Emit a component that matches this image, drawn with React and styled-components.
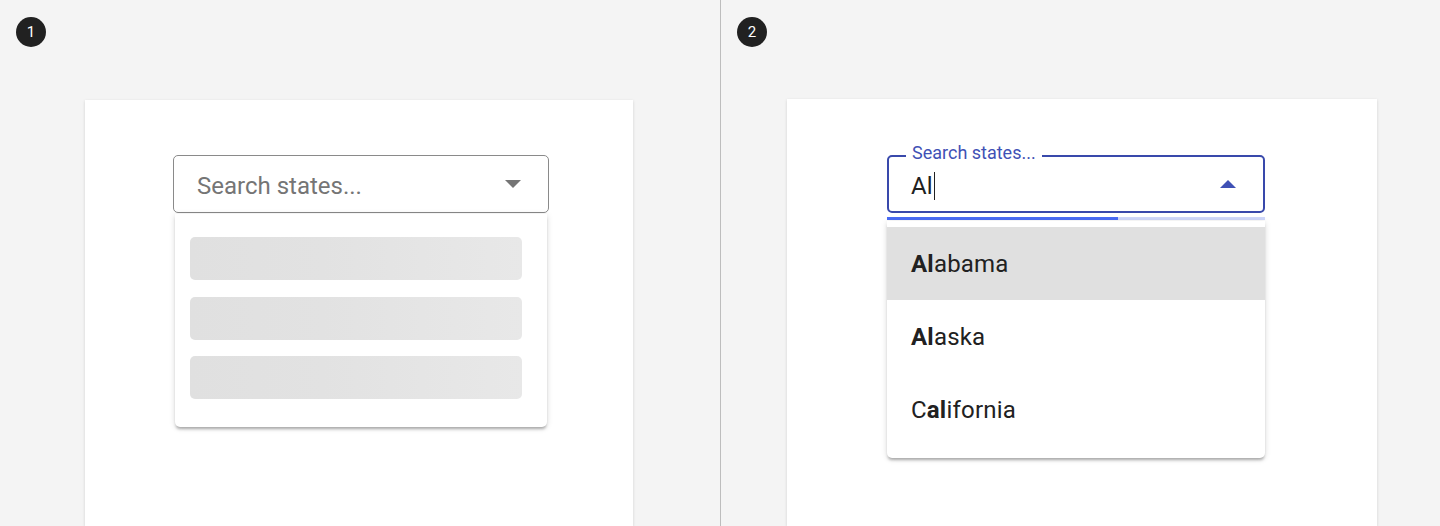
import React from "react";
import styled, { createGlobalStyle } from "styled-components";

const Global = createGlobalStyle`
  html, body, #root { height: 100%; margin: 0; }
  body { background: #f4f4f4; font-family: Roboto, "Liberation Sans", sans-serif; overflow: hidden; }
  * { box-sizing: border-box; }
`;

const Page = styled.div`
  display: flex;
  height: 100%;
`;

const Half = styled.section`
  flex: 0 0 ${(p) => p.$w}px;
  display: flex;
  flex-direction: column;
  padding: 17px 0 0 16px;
  min-height: 0;
`;

const Divider = styled.div`
  flex: 0 0 1px;
  background: #bdbdbd;
`;

const Badge = styled.div`
  width: 30px;
  height: 30px;
  border-radius: 50%;
  background: #212121;
  color: #fff;
  font-size: 15px;
  display: flex;
  align-items: center;
  justify-content: center;
`;

const Card = styled.div`
  margin: ${(p) => p.$top}px 0 0 ${(p) => p.$left}px;
  width: ${(p) => p.$w}px;
  flex: 1;
  background: #fff;
  box-shadow: 0 1px 3px rgba(0, 0, 0, 0.14);
  padding: ${(p) => p.$pt}px 0 0 ${(p) => p.$pl}px;
`;

const Field = styled.div`
  position: relative;
  width: ${(p) => p.$w}px;
`;

const InputBox = styled.div`
  position: relative;
  height: 58px;
  border: ${(p) => (p.$focused ? "2px solid #3949ab" : "1px solid #8a8a8a")};
  border-radius: 5px;
  display: flex;
  align-items: center;
  padding: 0 27px 0 ${(p) => (p.$focused ? 22 : 23)}px;
  background: #fff;
`;

const Placeholder = styled.span`
  flex: 1;
  font-size: 24px;
  color: #757575;
  line-height: 1;
  padding-top: 4px;
`;

const Value = styled.span`
  flex: 1;
  display: flex;
  align-items: center;
  font-size: 24px;
  color: #212121;
  line-height: 1;
  padding-top: 3px;
`;

const Caret = styled.span`
  display: inline-block;
  width: 1.5px;
  height: 28px;
  background: #212121;
  margin-left: 1px;
`;

const FloatLabel = styled.span`
  position: absolute;
  left: 17px;
  top: -15px;
  padding: 0 6px;
  background: #fff;
  font-size: 18px;
  color: #3f51b5;
  line-height: 22px;
`;

const Progress = styled.div`
  height: 3px;
  margin: 4px 0 0 0;
  background: #d0d8fb;
  position: relative;
`;

const ProgressFill = styled.div`
  height: 100%;
  background: #4a6cf5;
`;

const Menu = styled.div`
  position: absolute;
  left: ${(p) => p.$inset}px;
  right: ${(p) => p.$inset}px;
  top: ${(p) => p.$top}px;
  background: #fff;
  border-radius: 0 0 5px 5px;
  box-shadow: 0 3px 3px -1px rgba(0, 0, 0, 0.28), 0 1px 6px rgba(0, 0, 0, 0.14);
  padding: ${(p) => p.$pad};
  display: flex;
  flex-direction: column;
  gap: ${(p) => p.$gap || 0}px;
`;

const Skeleton = styled.div`
  height: 43px;
  width: 332px;
  border-radius: 5px;
  background: linear-gradient(90deg, #e0e0e0 0%, #e2e2e2 40%, #e8e8e8 100%);
`;

const Option = styled.div`
  height: 73px;
  display: flex;
  align-items: center;
  padding-left: 24px;
  font-size: 24px;
  color: #212121;
  letter-spacing: 0.2px;
  background: ${(p) => (p.$active ? "#e0e0e0" : "transparent")};
  b { font-weight: 700; }
`;

const Arrow = ({ up, color }) => (
  <svg width="16" height="8" viewBox="0 0 16 8" style={{ flex: "0 0 auto" }}>
    {up ? <path d="M0 8 L8 0 L16 8 Z" fill={color} /> : <path d="M0 0 L16 0 L8 8 Z" fill={color} />}
  </svg>
);

export default function App() {
  return (
    <>
      <Global />
      <Page>
        <Half $w={720}>
          <Badge>1</Badge>
          <Card $top={53} $left={69} $w={548} $pt={55} $pl={88}>
            <Field $w={376}>
              <InputBox>
                <Placeholder>Search states...</Placeholder>
                <Arrow color="#757575" />
              </InputBox>
              <Menu $inset={2} $top={59} $pad="23px 0 28px 15px" $gap={16.5}>
                <Skeleton />
                <Skeleton />
                <Skeleton />
              </Menu>
            </Field>
          </Card>
        </Half>
        <Divider />
        <Half $w={719}>
          <Badge>2</Badge>
          <Card $top={52} $left={50} $w={590} $pt={56} $pl={100}>
            <Field $w={378}>
              <InputBox $focused>
                <FloatLabel>Search states...</FloatLabel>
                <Value>
                  Al<Caret />
                </Value>
                <Arrow up color="#3f51b5" />
              </InputBox>
              <Progress>
                <ProgressFill style={{ width: "61%" }} />
              </Progress>
              <Menu $inset={0} $top={66} $pad="6px 0 12px 0">
                <Option $active>
                  <span><b>Al</b>abama</span>
                </Option>
                <Option>
                  <span><b>Al</b>aska</span>
                </Option>
                <Option>
                  <span>C<b>al</b>ifornia</span>
                </Option>
              </Menu>
            </Field>
          </Card>
        </Half>
      </Page>
    </>
  );
}
